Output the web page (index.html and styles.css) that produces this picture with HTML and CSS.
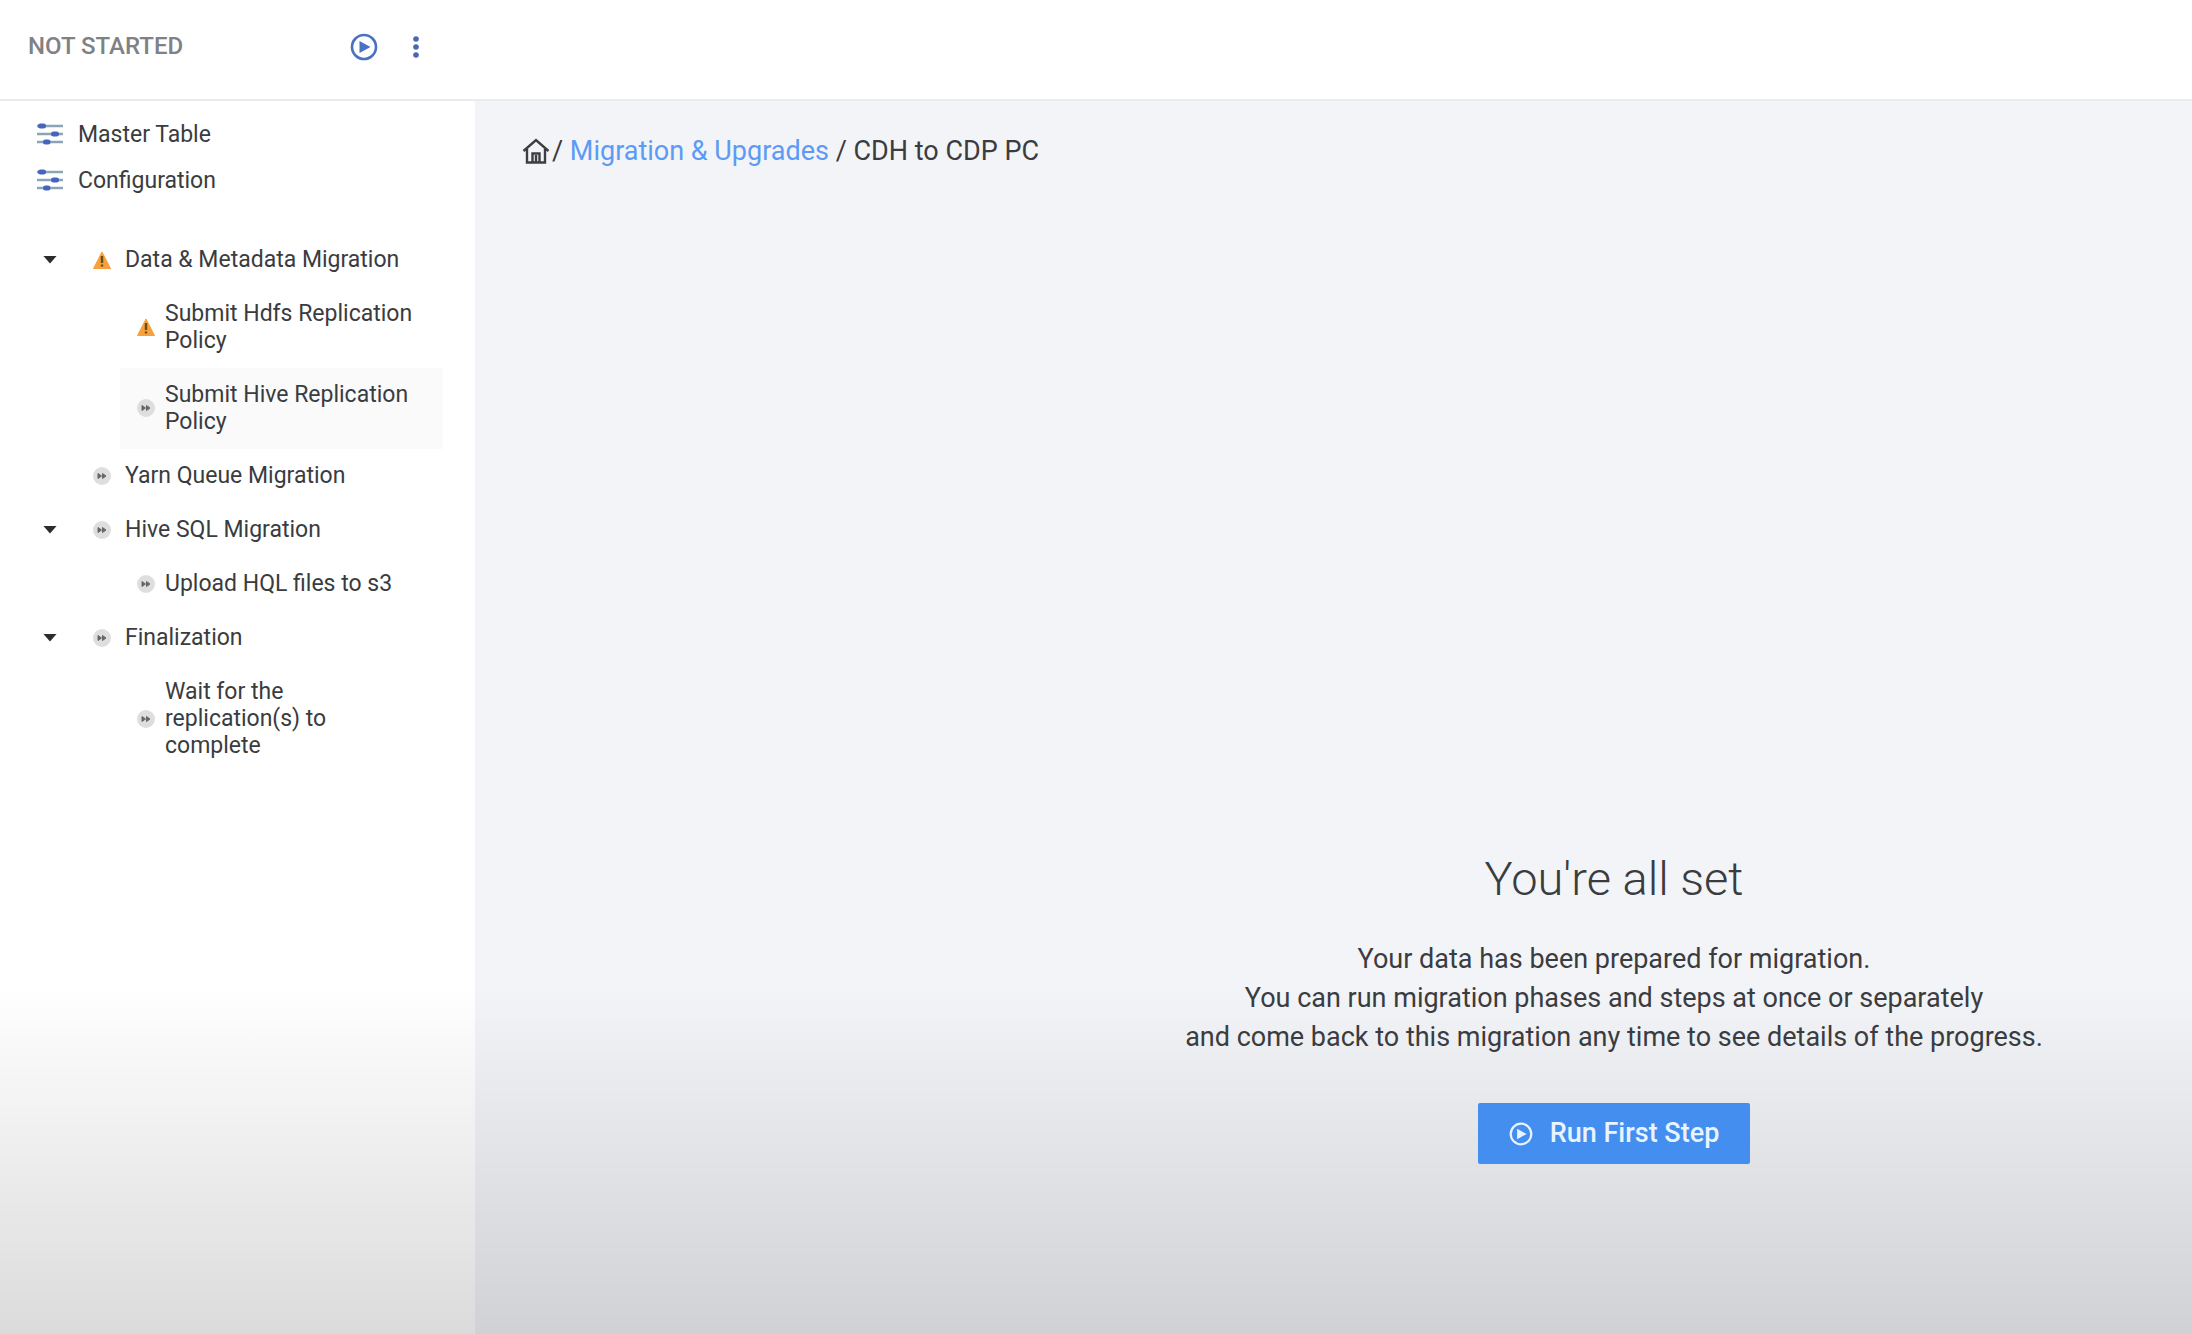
FILE: index.html
```html
<!DOCTYPE html>
<html lang="en">
<head>
<meta charset="utf-8">
<title>CDH to CDP PC</title>
<link rel="stylesheet" href="styles.css">
</head>
<body>
<svg class="defs" aria-hidden="true">
  <symbol id="play" viewBox="0 0 28 28">
    <circle cx="14" cy="14" r="12" fill="none" stroke="currentColor" stroke-width="2.6"/>
    <path d="M9.500 8 20.500 14 9.500 20Z" fill="currentColor"/>
  </symbol>
  <symbol id="sliders" viewBox="0 0 28 24">
    <path d="M1 4H27M1 12H27M1 20H27" stroke="#8aa5b4" stroke-width="2.400"/>
    <path d="M4.500 4H7.500M17.500 12H20.500M9.500 20H12" stroke="#4563c0" stroke-width="5" stroke-linecap="round"/>
  </symbol>
  <symbol id="warn" viewBox="0 0 18 18">
    <path d="M9 1 17.500 17.500H.5Z" fill="#f7a13c" stroke="#f7a13c" stroke-linejoin="round"/>
    <path d="M9 5V12M9 13.500V15.500" stroke="#6b4c12" stroke-width="2.400"/>
  </symbol>
  <symbol id="wait" viewBox="0 0 18 18">
    <circle cx="9" cy="9" r="9" fill="#dededf"/>
    <path d="M5 6.500 8.500 9 5 11.500ZM9.500 6.500 13 9 9.500 11.500Z" fill="#67676b" stroke="#67676b"/>
  </symbol>
</svg>
<div class="page">
  <header class="topbar">
    <span class="status">NOT STARTED</span>
    <button class="icon-btn" type="button" aria-label="Run"><svg class="play"><use href="#play"/></svg></button>
    <button class="icon-btn" type="button" aria-label="More">
      <svg class="dots" viewBox="0 0 8 24"><g fill="#4a66b4"><circle cx="4" cy="4" r="2.800"/><circle cx="4" cy="12" r="2.800"/><circle cx="4" cy="20" r="2.800"/></g></svg>
    </button>
  </header>
  <nav class="sidebar">
    <ul class="links">
      <li><a href="#"><svg class="sliders"><use href="#sliders"/></svg>Master Table</a></li>
      <li><a href="#"><svg class="sliders"><use href="#sliders"/></svg>Configuration</a></li>
    </ul>
    <ul class="steps">
      <li class="phase"><button class="caret" type="button" aria-label="Collapse"></button><svg class="state"><use href="#warn"/></svg><a href="#">Data &amp; Metadata Migration</a></li>
      <li class="step"><svg class="state"><use href="#warn"/></svg><a href="#">Submit Hdfs Replication Policy</a></li>
      <li class="step active"><svg class="state"><use href="#wait"/></svg><a href="#">Submit Hive Replication Policy</a></li>
      <li class="phase leaf"><svg class="state"><use href="#wait"/></svg><a href="#">Yarn Queue Migration</a></li>
      <li class="phase"><button class="caret" type="button" aria-label="Collapse"></button><svg class="state"><use href="#wait"/></svg><a href="#">Hive SQL Migration</a></li>
      <li class="step"><svg class="state"><use href="#wait"/></svg><a href="#">Upload HQL files to s3</a></li>
      <li class="phase"><button class="caret" type="button" aria-label="Collapse"></button><svg class="state"><use href="#wait"/></svg><a href="#">Finalization</a></li>
      <li class="step"><svg class="state"><use href="#wait"/></svg><a href="#">Wait for the<br>replication(s) to<br>complete</a></li>
    </ul>
  </nav>
  <main class="main">
    <nav class="crumbs" aria-label="Breadcrumb">
      <a class="home" href="#" aria-label="Home"><svg viewBox="0 0 28 28" fill="none" stroke="#3c3e42" stroke-width="2.400"><path d="M1.500 14 14 3 26.500 14M5 12V25.500H23V12M10.500 25V16.500H17.500V25M14 18V25"/></svg></a>
      <span>/ <a href="#">Migration &amp; Upgrades</a> / CDH to CDP PC</span>
    </nav>
    <section class="ready">
      <h1>You're all set</h1>
      <p>Your data has been prepared for migration.<br>You can run migration phases and steps at once or separately<br>and come back to this migration any time to see details of the progress.</p>
      <button class="run" type="button"><svg><use href="#play"/></svg>Run First Step</button>
    </section>
  </main>
</div>
</body>
</html>
```
FILE: styles.css
```css
* { box-sizing: border-box; }
body {
  margin: 0;
  font-family: Roboto, "Liberation Sans", sans-serif;
  font-size: 23px;
  line-height: 27px;
  color: #3a3c40;
}
a { color: inherit; text-decoration: none; }
ul { list-style: none; margin: 0; padding: 0; }
button { font: inherit; border: 0; padding: 0; background: none; cursor: pointer; }
svg { display: block; flex: none; }
.defs { position: absolute; width: 0; height: 0; }

.page {
  display: grid;
  grid-template: auto 1fr / 475px 1fr;
  min-height: 100vh;
}
.topbar {
  grid-column: 1 / -1;
  display: flex;
  align-items: center;
  height: 101px;
  padding: 0 28px 6px;
  background: #fff;
  border-bottom: 2px solid #eaebed;
}
.status { width: 322px; font-size: 24px; font-weight: 500; color: #808186; }
.icon-btn { color: #4a72c4; }
.play { width: 28px; height: 28px; }
.dots { width: 8px; height: 24px; margin-left: 34px; }

.sidebar, .main {
  background-image: linear-gradient(transparent calc(100% - 350px), rgba(0, 0, 0, .14));
}
.sidebar { background-color: #fff; padding-top: 10px; }
.links a { display: flex; align-items: center; gap: 14px; height: 46px; padding-left: 36px; }
.sliders { width: 28px; height: 24px; }
.steps { padding: 30px 32px 0 36px; }
.steps li { display: flex; align-items: center; padding: 13px 0 14px; }
.steps .state { width: 18px; height: 18px; }
.phase .state { margin-right: 14px; }
.phase.leaf { padding-left: 57px; }
.steps .step { margin-left: 84px; padding-left: 17px; padding-right: 20px; }
.step .state { margin-right: 10px; }
.active { background: #fafafa; }
.caret {
  width: 14px;
  height: 8px;
  margin: 0 36px 0 7px;
  background: #2b2c2e;
  clip-path: polygon(0 0, 100% 0, 50% 100%);
}

.main { background-color: #f2f4f8; padding: 34px 0 0 47px; font-size: 27px; }
.crumbs { display: flex; align-items: center; line-height: 32px; }
.crumbs span a { color: #5c9bf5; }
.home svg { width: 28px; height: 28px; margin-right: 2px; }
.ready {
  display: flex;
  flex-direction: column;
  align-items: center;
  margin: 680px 0 40px 514px;
  text-align: center;
}
.ready h1 { margin: 0; font-size: 47px; font-weight: 300; line-height: 64px; }
.ready p { margin: 29px 0 46px; line-height: 39px; }
.run {
  display: flex;
  align-items: center;
  gap: 17px;
  height: 61px;
  padding: 0 31px;
  border-radius: 2px;
  background: #448eef;
  color: #e8f4ff;
  font-weight: 500;
}
.run svg { width: 24px; height: 24px; }
```
